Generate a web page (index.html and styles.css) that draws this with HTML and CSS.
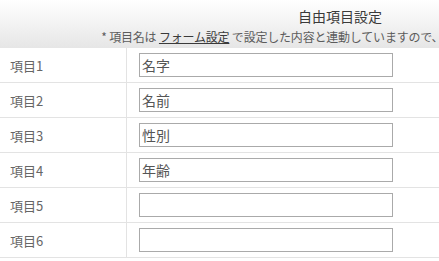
FILE: index.html
```html
<!DOCTYPE html>
<html lang="ja">
<head>
    <meta charset="UTF-8">
    <title>自由項目設定</title>
    <link rel="stylesheet" href="styles.css">
</head>
<body>
    <table class="free-items">
        <thead>
            <tr>
                <th colspan="2">
                    <div class="title">自由項目設定</div>
                    <div class="note">* 項目名は <a href="#">フォーム設定</a> で設定した内容と連動していますので、ここでは変更できません。</div>
                </th>
            </tr>
        </thead>
        <tbody>
            <tr><td class="label">項目1</td><td class="field"><input type="text" value="名字"></td></tr>
            <tr><td class="label">項目2</td><td class="field"><input type="text" value="名前"></td></tr>
            <tr><td class="label">項目3</td><td class="field"><input type="text" value="性別"></td></tr>
            <tr><td class="label">項目4</td><td class="field"><input type="text" value="年齢"></td></tr>
            <tr><td class="label">項目5</td><td class="field"><input type="text" value=""></td></tr>
            <tr><td class="label">項目6</td><td class="field"><input type="text" value=""></td></tr>
        </tbody>
    </table>
</body>
</html>
```

FILE: styles.css
```css
body {
    margin: 0;
    overflow: hidden;
    background-color: #fff;
    font-family: "Noto Sans CJK JP", "Noto Sans", sans-serif;
}

.free-items {
    width: 680px;
    border-collapse: collapse;
}

.free-items th {
    height: 48px;
    padding: 0;
    font-weight: normal;
    text-align: center;
    background: linear-gradient(to bottom, #ffffff, #e6e6e6);
}

.free-items .title {
    font-size: 14px;
    line-height: 18px;
    color: #3a3a3a;
    margin-top: 5px;
}

.free-items .note {
    font-size: 12px;
    line-height: 18px;
    color: #5c5c5c;
    margin-top: 3px;
    padding-left: 6px;
    letter-spacing: -0.2px;
    white-space: nowrap;
}

.free-items .note a {
    color: #3a3a3a;
}

.free-items td {
    height: 34px;
    padding: 0;
    border-bottom: 1px solid #e3e3e3;
}

.free-items .label {
    width: 116px;
    padding-left: 10px;
    border-right: 1px solid #e3e3e3;
    font-size: 13px;
    color: #666;
}

.free-items .field {
    padding-left: 12px;
}

.free-items input {
    display: block;
    width: 254px;
    height: 24px;
    box-sizing: border-box;
    margin: 0;
    padding: 0 2px;
    border: 1px solid #aaa;
    border-radius: 0;
    font-family: "Noto Sans CJK JP", sans-serif;
    font-size: 14px;
    color: #555;
}
```
